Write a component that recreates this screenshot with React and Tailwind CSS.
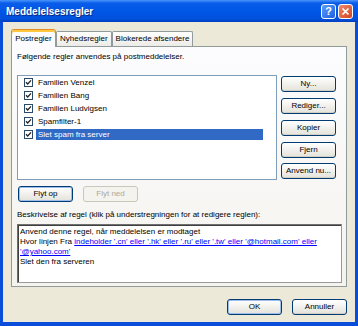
import React from "react";

const rules = [
  { name: "Familien Venzel" },
  { name: "Familien Bang" },
  { name: "Familien Ludvigsen" },
  { name: "Spamfilter-1" },
  { name: "Slet spam fra server", selected: true },
];

function CheckBox() {
  return (
    <svg width="9" height="9" viewBox="0 0 9 9" className="shrink-0">
      <rect x="0.5" y="0.5" width="8" height="8" fill="#fff" stroke="#2a4a6a" />
      <path d="M2 4.2 L3.7 6 L7 2.4" fill="none" stroke="#222" strokeWidth="1.3" />
    </svg>
  );
}

function XpButton({ children, disabled, isDefault, className = "" }) {
  const look = disabled
    ? "border-[#c9c7ba] bg-[#f4f3ee] text-[#aca899]"
    : "border-[#003c74] bg-gradient-to-b from-white to-[#e3e2da] text-black";
  const ring = isDefault
    ? "shadow-[inset_0_0_0_1px_#9fbdea]"
    : disabled
    ? ""
    : "shadow-[inset_0_-1px_0_#d5cfc3]";
  return (
    <div
      className={`flex h-[16px] w-[55px] items-center justify-center rounded-[3px] border text-[8px] leading-none ${look} ${ring} ${className}`}
    >
      {children}
    </div>
  );
}

function Tab({ label, active }) {
  if (active) {
    return (
      <div className="relative z-10 -mb-px flex h-[18px] w-[45px] items-center justify-center rounded-t-[3px] border border-b-0 border-[#919b9c] border-t-[#e68b2c] bg-[#fcfcfe] pt-[1px] shadow-[inset_0_2px_0_#ffc73c]">
        {label}
      </div>
    );
  }
  return (
    <div className="flex h-[15px] items-center rounded-t-[2px] border border-b-0 border-[#919b9c] bg-gradient-to-b from-white to-[#ecebe6] px-[3px]">
      {label}
    </div>
  );
}

export default function App() {
  return (
    <div className="flex h-[326px] w-[358px] flex-col bg-[#0a4dd8] font-['Liberation_Sans',Arial,sans-serif] text-[8px] text-black">
      {/* title bar */}
      <div className="flex h-[22px] shrink-0 items-center bg-[linear-gradient(to_bottom,#4a95fb_0%,#0a5de9_14%,#0056e6_50%,#0051dd_85%,#003fc0_100%)] pl-[6px] pr-[5px]">
        <span className="text-[10px] font-bold text-white [text-shadow:1px_1px_0_#0b2a80]">
          Meddelelsesregler
        </span>
        <div className="ml-auto flex gap-[2px]">
          <div className="flex h-[15px] w-[15px] items-center justify-center rounded-[3px] border border-white bg-gradient-to-br from-[#5d9cf8] to-[#1c5ee0] text-[11px] font-bold leading-none text-white">
            ?
          </div>
          <div className="flex h-[15px] w-[15px] items-center justify-center rounded-[3px] border border-white bg-gradient-to-br from-[#ec8a6a] to-[#d3401c]">
            <svg width="9" height="9" viewBox="0 0 9 9">
              <path d="M1.5 1.5 L7.5 7.5 M7.5 1.5 L1.5 7.5" stroke="#fff" strokeWidth="1.7" />
            </svg>
          </div>
        </div>
      </div>

      {/* dialog body */}
      <div className="mx-[3px] mb-[4px] flex flex-1 flex-col bg-[#ece9d8] px-[8px] pt-[7px]">
        <div className="flex h-[17px] items-end">
          <Tab label="Postregler" active />
          <Tab label="Nyhedsregler" />
          <Tab label="Blokerede afsendere" />
        </div>

        <div className="flex h-[241px] flex-col border border-[#919b9c] bg-gradient-to-b from-[#fcfcfe] to-[#f4f3ee] px-[5px]">
          <div className="mt-[5px] h-[10px] leading-[10px]">
            Følgende regler anvendes på postmeddelelser.
          </div>

          <div className="mt-[13px] flex">
            <div className="h-[105px] w-[260px] border border-[#7f9db9] bg-white">
              {rules.map((r) => (
                <div key={r.name} className="flex h-[13px] items-center pl-[6px]">
                  <CheckBox />
                  <span
                    className={`ml-[3px] flex h-[11px] items-center px-[2px] ${
                      r.selected ? "w-[227px] bg-[#316ac5] text-white" : ""
                    }`}
                  >
                    {r.name}
                  </span>
                </div>
              ))}
            </div>
            <div className="ml-[4px] flex flex-col gap-[6px] pt-[1px]">
              <XpButton>Ny...</XpButton>
              <XpButton>Rediger...</XpButton>
              <XpButton>Kopier</XpButton>
              <XpButton>Fjern</XpButton>
              <XpButton className="-mt-px">Anvend nu...</XpButton>
            </div>
          </div>

          <div className="mt-[6px] flex gap-[10px] pl-[1px]">
            <XpButton isDefault>Flyt op</XpButton>
            <XpButton disabled>Flyt ned</XpButton>
          </div>

          <div className="mt-[8px] h-[10px] leading-[10px]">
            Beskrivelse af regel (klik på understregningen for at redigere reglen):
          </div>

          <div className="mt-[4px] h-[59px] w-[325px] border border-[#9a9a9a] border-l-[#6f6f6f] border-t-[#6f6f6f] bg-white">
            <div className="h-full border-l border-t border-[#404040] px-[1px] pt-[1px] leading-[10px] whitespace-nowrap">
              <div>Anvend denne regel, når meddelelsen er modtaget</div>
              <div>
                Hvor linjen Fra{" "}
                <span className="text-[#0000ff] underline">
                  indeholder '.cn' eller '.hk' eller '.ru' eller '.tw' eller '@hotmail.com' eller
                </span>
              </div>
              <div>
                <span className="text-[#0000ff] underline">'@yahoo.com'</span>
              </div>
              <div>Slet den fra serveren</div>
            </div>
          </div>
        </div>

        <div className="mt-[12px] flex justify-end gap-[10px]">
          <XpButton isDefault>OK</XpButton>
          <XpButton>Annuller</XpButton>
        </div>
      </div>
    </div>
  );
}
